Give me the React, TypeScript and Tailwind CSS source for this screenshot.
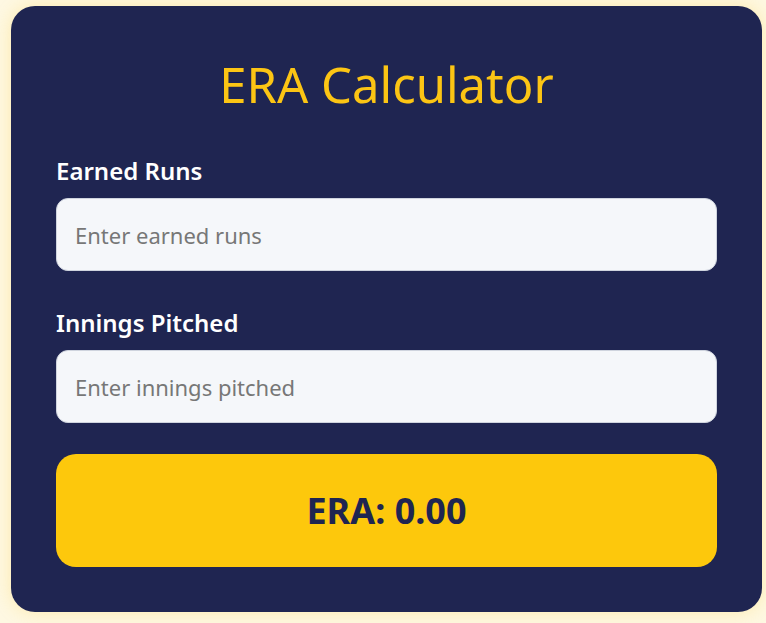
import { useState } from "react";

export default function App() {
  const [runs, setRuns] = useState("");
  const [innings, setInnings] = useState("");

  const r = parseFloat(runs);
  const ip = parseFloat(innings);
  const era = !isNaN(r) && !isNaN(ip) && ip > 0 ? ((r * 9) / ip).toFixed(2) : "0.00";

  return (
    <div
      className="min-h-[623px] bg-[#fef8e2] pt-[6px] pl-[11px] pr-[5px] pb-[11px]"
      style={{ fontFamily: '"Noto Sans", "Open Sans", sans-serif' }}
    >
      <div className="w-[751px] h-[606px] rounded-[24px] bg-[#1f2551] px-[45px] pt-[48px] shadow-[0_0_18px_rgba(253,200,20,0.25)]">
        <h1 className="text-center text-[49px] leading-[60px] text-[#fcc514] mb-[41px]">ERA Calculator</h1>

        <label className="block text-[24px] font-semibold leading-[32px] text-white mb-[11px]">Earned Runs</label>
        <input
          type="number"
          value={runs}
          onChange={(e) => setRuns(e.target.value)}
          placeholder="Enter earned runs"
          className="block w-full h-[73px] rounded-[12px] border border-[#cfd4de] bg-[#f5f7fa] px-[18px] text-[22px] text-[#333] placeholder:text-[#777] outline-none mb-[36px]"
        />

        <label className="block text-[24px] font-semibold leading-[32px] text-white mb-[11px]">Innings Pitched</label>
        <input
          type="number"
          value={innings}
          onChange={(e) => setInnings(e.target.value)}
          placeholder="Enter innings pitched"
          className="block w-full h-[73px] rounded-[12px] border border-[#cfd4de] bg-[#f5f7fa] px-[18px] text-[22px] text-[#333] placeholder:text-[#777] outline-none mb-[31px]"
        />

        <div className="h-[113px] rounded-[20px] bg-[#fdc80c] flex items-center justify-center">
          <span className="text-[36px] font-bold text-[#1f2551]">ERA: {era}</span>
        </div>
      </div>
    </div>
  );
}
